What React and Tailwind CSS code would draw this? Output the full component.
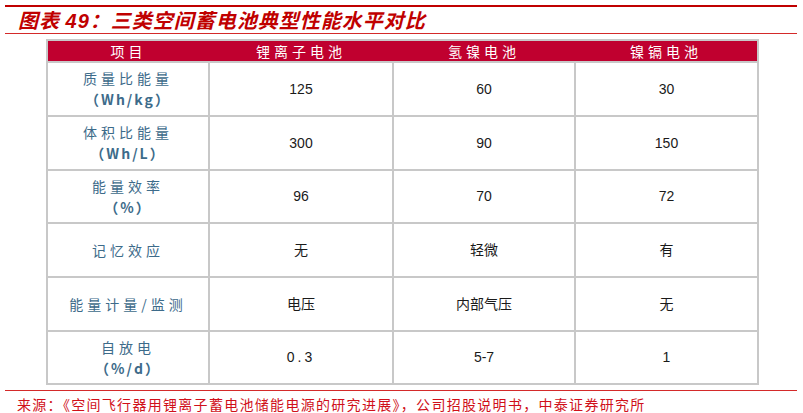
import React from 'react';

const cjk = "font-['Noto_Sans_CJK_SC',sans-serif]";
const num = "font-['Liberation_Sans','Noto_Sans_CJK_SC',sans-serif]";

const rows = [
  { h: 'h-[54px]', label: ['质量比能量', '（Wh/kg）'], values: ['125', '60', '30'] },
  { h: 'h-[54px]', label: ['体积比能量', '（Wh/L）'], values: ['300', '90', '150'] },
  { h: 'h-[53px]', label: ['能量效率', '（%）'], values: ['96', '70', '72'] },
  { h: 'h-[54px]', label: ['记忆效应'], values: ['无', '轻微', '有'] },
  { h: 'h-[54px]', label: ['能量计量/监测'], values: ['电压', '内部气压', '无'] },
  { h: 'h-[53px]', label: ['自放电', '（%/d）'], values: ['0.3', '5-7', '1'] },
];

const headers = ['项目', '锂离子电池', '氢镍电池', '镍镉电池'];

export default function App() {
  return (
    <div className="w-[803px] h-[413px] bg-white overflow-hidden pt-[5px]">
      {/* Title block */}
      <div className="mx-[5px] w-[792px] h-[2px] bg-[#c00000]" />
      <div className="mx-[5px] w-[792px] h-[27px] flex items-center pl-[13px] border-b border-[#d42a2a]">
        <span className={`${cjk} text-[20px] leading-none font-bold italic text-[#c00000] tracking-[1px]`}>
          图表 <span className={num}>49</span>：三类空间蓄电池典型性能水平对比
        </span>
      </div>

      {/* Table */}
      <div className="ml-[46px] mt-[5px] w-[711px]">
        <table className="w-full table-fixed border-collapse border-2 border-[#c8c8c8]">
          <colgroup>
            <col className="w-[162px]" />
            <col className="w-[184px]" />
            <col className="w-[182px]" />
            <col className="w-[183px]" />
          </colgroup>
          <thead>
            <tr className="h-[22px] bg-[#c0002f]">
              {headers.map((h) => (
                <th
                  key={h}
                  className={`${cjk} p-0 text-[14px] leading-none font-normal text-white tracking-[4px] text-center`}
                >
                  {h}
                </th>
              ))}
            </tr>
          </thead>
          <tbody>
            {rows.map((r, i) => (
              <tr key={i} className={r.h}>
                <td className="border-2 border-[#c8c8c8] p-0 text-center">
                  {r.label.map((l, j) => (
                    <div
                      key={j}
                      className={`${cjk} text-[14px] leading-[21px] text-[#3d6b8a] ${j === 1 ? 'font-bold tracking-[2px]' : 'tracking-[4px]'}`}
                    >
                      {l}
                    </div>
                  ))}
                </td>
                {r.values.map((v, j) => (
                  <td
                    key={j}
                    className={`${num} border-2 border-[#c8c8c8] p-0 text-center text-[14px] text-[#1a1a1a] ${v === '0.3' ? 'tracking-[3px]' : ''}`}
                  >
                    {v}
                  </td>
                ))}
              </tr>
            ))}
          </tbody>
        </table>
      </div>

      {/* Source */}
      <div className="mx-[5px] mt-[5px] w-[792px] border-t border-[#d42a2a] pl-[12px] pt-[1px]">
        <span className={`${cjk} text-[14px] leading-[16px] text-[#d0101a] tracking-[1.3px]`}>
          来源：《空间飞行器用锂离子蓄电池储能电源的研究进展》，公司招股说明书，中泰证券研究所
        </span>
      </div>
    </div>
  );
}
